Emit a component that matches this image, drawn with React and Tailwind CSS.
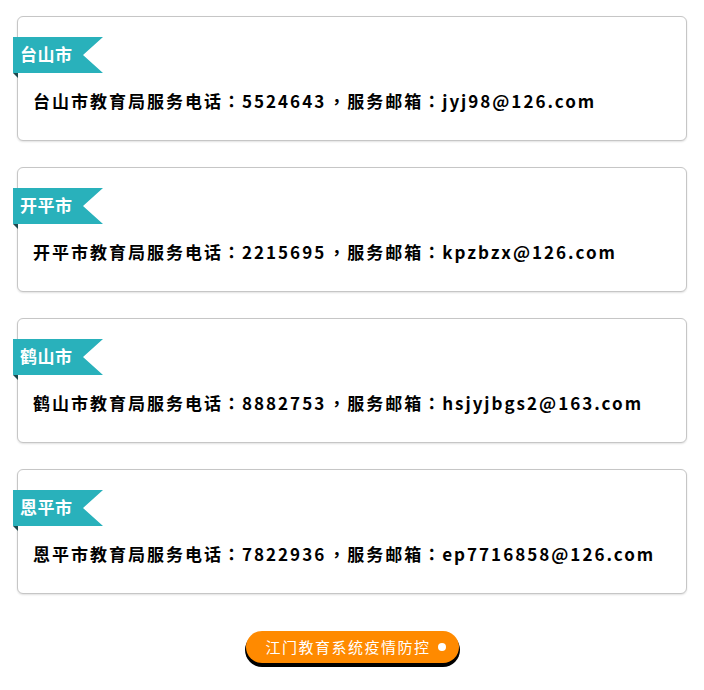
const offices = [
  { city: "台山市", phone: "5524643", email: "jyj98@126.com" },
  { city: "开平市", phone: "2215695", email: "kpzbzx@126.com" },
  { city: "鹤山市", phone: "8882753", email: "hsjyjbgs2@163.com" },
  { city: "恩平市", phone: "7822936", email: "ep7716858@126.com" },
];

const punct = { fontFamily: '"Noto Sans CJK TC", "Noto Sans CJK SC", sans-serif' };

function Ribbon({ label }) {
  return (
    <div className="-ml-[5px]">
      <div className="h-[36px] w-[90px] bg-[#29b1bb] pl-[7px] pb-[3px] flex items-center [clip-path:polygon(0_0,100%_0,70px_50%,100%_100%,0_100%)]">
        <span className="text-white text-[17px] font-bold leading-none tracking-[0.5px]">{label}</span>
      </div>
      <div className="h-[5px] w-[5px] bg-[#1d474c] [clip-path:polygon(0_0,100%_0,100%_100%)]" />
    </div>
  );
}

export default function App() {
  return (
    <div
      className="min-h-screen bg-white px-[17px] pt-[16px] pb-[22px]"
      style={{ fontFamily: '"Noto Sans CJK SC", "Noto Sans", sans-serif' }}
    >
      <div className="flex flex-col gap-[26px]">
        {offices.map((o) => (
          <div
            key={o.city}
            className="h-[125px] w-[670px] rounded-[6px] border border-[#c6c6c6] bg-white pt-[20px] shadow-[0_1px_2px_rgba(0,0,0,0.12)]"
          >
            <Ribbon label={o.city} />
            <p className="mt-[11px] pl-[15px] text-[17px] leading-[24px] font-bold tracking-[2px] text-black">
              {o.city}教育局服务电话<span style={punct}>：</span>{o.phone}
              <span className="ml-[2px]" style={punct}>，</span>服务邮箱<span style={punct}>：</span>{o.email}
            </p>
          </div>
        ))}
      </div>

      {/* 底部按钮 */}
      <div className="mt-[37px] flex justify-center">
        <a
          href="#"
          className="flex h-[32px] w-[213px] items-center rounded-full bg-[#ff8a00] pl-[20px] pr-[13px] text-[15px] tracking-[1.5px] text-white shadow-[0_3px_0_1px_#000]"
        >
          <span className="flex-1">江门教育系统疫情防控</span>
          <span className="h-[8px] w-[8px] rounded-full bg-white" />
        </a>
      </div>
    </div>
  );
}
